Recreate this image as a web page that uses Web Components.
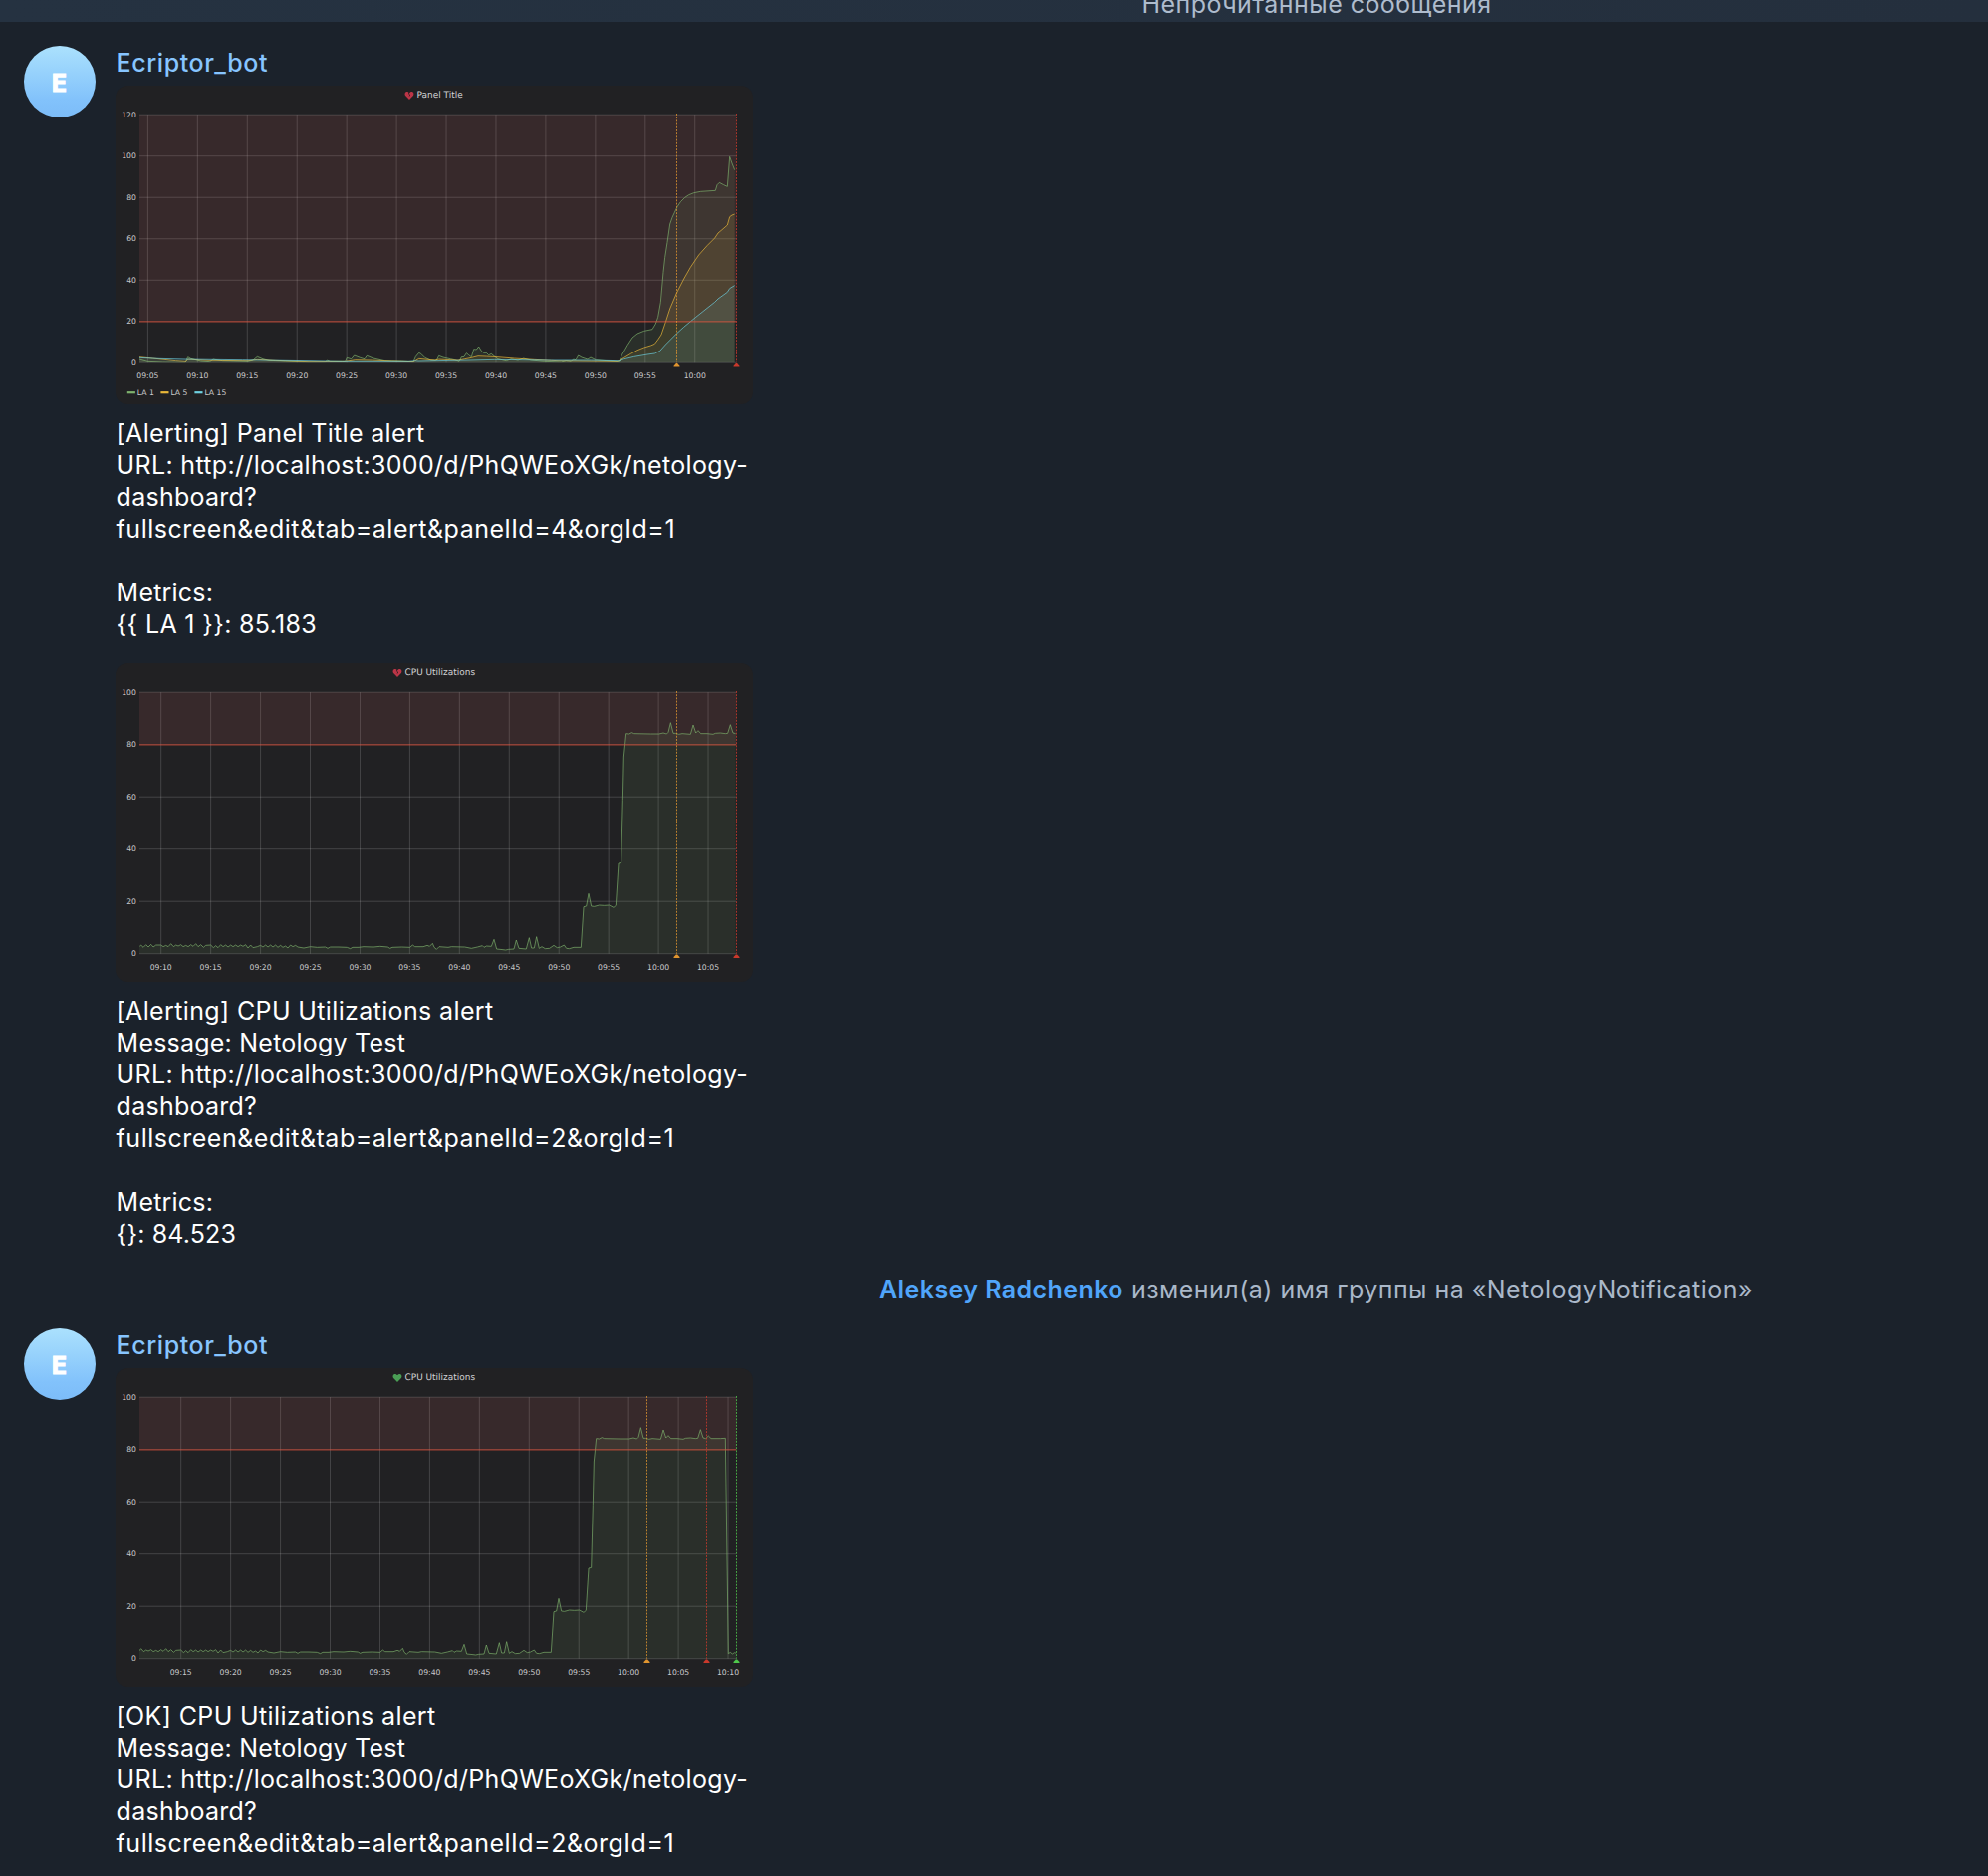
<!DOCTYPE html>
<html lang="ru">
<head>
<meta charset="utf-8">
<title>NetologyNotification</title>
<style>
html,body{margin:0;background:#1b222b}
body{width:1996px;height:1884px;overflow:hidden;font-family:Inter,"Liberation Sans",sans-serif;font-size:25px;line-height:32px;color:#fff}
</style>
</head>
<body>
<chat-history>
  <unread-bar><fit-text w="351">Непрочитанные сообщения</fit-text></unread-bar>
  <chat-message class="first" letter="E">
    <fit-text slot="name" w="152.5">Ecriptor_bot</fit-text>
    <graph-panel kind="load"></graph-panel>
    <message-text>
      <fit-text w="310">[Alerting] Panel Title alert</fit-text>
      <fit-text w="634.5">URL: http://localhost:3000/d/PhQWEoXGk/netology-</fit-text>
      <fit-text w="141.5">dashboard?</fit-text>
      <fit-text w="561.5">fullscreen&amp;edit&amp;tab=alert&amp;panelId=4&amp;orgId=1</fit-text>
      <br>
      <fit-text w="97.5">Metrics:</fit-text>
      <fit-text w="201.5">{{ LA 1 }}: 85.183</fit-text>
    </message-text>
    <graph-panel kind="cpu"></graph-panel>
    <message-text>
      <fit-text w="379">[Alerting] CPU Utilizations alert</fit-text>
      <fit-text w="290.5">Message: Netology Test</fit-text>
      <fit-text w="634.5">URL: http://localhost:3000/d/PhQWEoXGk/netology-</fit-text>
      <fit-text w="141.5">dashboard?</fit-text>
      <fit-text w="560.5">fullscreen&amp;edit&amp;tab=alert&amp;panelId=2&amp;orgId=1</fit-text>
      <br>
      <fit-text w="97.5">Metrics:</fit-text>
      <fit-text w="120.5">{}: 84.523</fit-text>
    </message-text>
  </chat-message>
  <service-message>
    <fit-text slot="who" w="245">Aleksey Radchenko</fit-text>
    <fit-text w="624">изменил(а) имя группы на «NetologyNotification»</fit-text>
  </service-message>
  <chat-message letter="E">
    <fit-text slot="name" w="152.5">Ecriptor_bot</fit-text>
    <graph-panel kind="ok"></graph-panel>
    <message-text>
      <fit-text w="321">[OK] CPU Utilizations alert</fit-text>
      <fit-text w="290.5">Message: Netology Test</fit-text>
      <fit-text w="634.5">URL: http://localhost:3000/d/PhQWEoXGk/netology-</fit-text>
      <fit-text w="141.5">dashboard?</fit-text>
      <fit-text w="560.5">fullscreen&amp;edit&amp;tab=alert&amp;panelId=2&amp;orgId=1</fit-text>
    </message-text>
  </chat-message>
</chat-history>
<script>
function define(name, css, html, ready) {
  const tpl = document.createElement('template');
  tpl.innerHTML = '<style>' + css + '</style>' + html;
  customElements.define(name, class extends HTMLElement {
    constructor() {
      super();
      this.attachShadow({ mode: 'open' }).append(tpl.content.cloneNode(true));
    }
    connectedCallback() { if (ready) ready(this, this.shadowRoot); }
  });
}

define('chat-history', ':host{display:flex;flex-direction:column;width:1996px;height:1884px;background:#1b222b}::slotted(*){flex:none}', '<slot></slot>');

define('unread-bar', ':host{display:flex;justify-content:center;align-items:flex-end;height:22px;box-sizing:border-box;padding:0 0 2.5px 648px;background:linear-gradient(90deg,#253241,#242f3d);color:#aebccd;overflow:hidden}', '<slot></slot>');

define('chat-message',
  ':host{display:flex;align-items:flex-start;padding:23px 0 0 24px;gap:20px}:host(.first){padding-top:24px}' +
  '.avatar{flex:none;width:72px;height:72px;border-radius:50%;background:linear-gradient(#abe1fd,#82c2fb 75%,#7cbcf8);display:flex;align-items:center;justify-content:center;font-size:24.5px;font-weight:700;-webkit-text-stroke:1.2px #fff;stroke-linejoin:round;padding:1px 1px 0 0;box-sizing:border-box}' +
  '.body{display:flex;flex-direction:column;padding-top:1px}.name{color:#87c5ff;font-weight:500;height:39px;padding-left:.6px}',
  '<div class="avatar"></div><div class="body"><div class="name"><slot name="name"></slot></div><slot></slot></div>',
  (el, r) => { r.querySelector('.avatar').textContent = el.getAttribute('letter'); });

define('message-text', ':host{display:block;padding:13px 0 23px .6px}::slotted(fit-text){display:table}', '<slot></slot>');

define('service-message',
  ':host{display:flex;justify-content:center;gap:8px;padding:1px 0 0 647px;color:#aab8c9}.who{color:#50a5fa;font-weight:600}',
  '<span class="who"><slot name="who"></slot></span><slot></slot>');

// Spreads its letters so that the line takes the advance width given in "w".
define('fit-text', ':host{display:inline-block;white-space:pre}', '<slot></slot>', el => {
  const n = el.textContent.length, w = +el.getAttribute('w');
  el.style.letterSpacing = '0px';
  el.style.letterSpacing = ((w - el.getBoundingClientRect().width) / n).toFixed(3) + 'px';
});

// Samples are kept in thirds of a pixel, as x,y pairs.
const shift = (s, d) => s.trim().split(/\s+/).map(p => { const [x, y] = p.split(','); return (+x + d) + ',' + y; }).join(' ');
const cpuBase = `90,872 95,867 102,874 110,866 117,873 125,865 132,873 140,867 155,867 162,872 170,868 177,872 185,863 193,872 200,867 207,870 215,866 222,872 230,868 237,872 245,866 252,871 260,863 267,872 275,866 283,874 290,868 305,867 313,875 320,869 327,875 335,866 342,872 350,867 357,873 365,867 372,872 380,867 387,872 395,867 402,871 410,866 417,876 425,867 432,875 445,872 455,868 462,873 470,867 477,873 485,867 492,873 500,867 507,874 515,868 522,874 530,870 537,876 545,867 552,872 560,868 567,873 585,876 605,872 625,874 650,873 657,877 665,873 690,873 715,874 725,878 732,874 750,874 765,872 795,873 815,871 838,873 845,877 852,874 880,873 905,874 913,867 920,872 945,872 957,868 964,871 973,862 978,874 985,880 993,872 1020,874 ` +
  shift(`40,872 80,873 100,877 118,873 133,869 138,874 145,870 160,871 168,850 176,879 195,881 203,882 212,880 228,879 235,852 243,877 265,879 274,845 281,876 289,876 296,842 304,877 312,872 322,878 335,877 348,868 358,875 368,873 379,867 386,877 395,878 408,874 430,874 438,752 446,750 453,712 461,750 470,751 485,747 500,748 515,747 528,754 535,748 543,621 551,619 556,430 559,300 566,230 575,231 583,227 590,230 640,231 665,231 678,228 688,231 693,226 700,197 708,229 715,229 725,232 735,230 760,232 768,204 776,228 783,221 791,230 810,230 828,232 835,229 850,228 865,230 872,229 880,203 888,228 896,230`, 990);
const cpuEnd = shift('904,222 912,230 940,230 955,229 964,878 970,874 976,879 983,875 988,877', 990);

const G = '#7eb26d', Y = '#eab839', B = '#6ed0e0', OR = '#e0952f', RD = '#c9392b', GR = '#4fc74b';
const panels = {
  load: {
    title: 'Panel Title', tx: 302.5, heart: 295, alert: true, bottom: 278.3, max: 120, threshold: 20,
    first: 5, n: 12, x0: 32.4, marks: [[563.5, OR], [623.5, RD]], legend: true,
    series: [
      [G, '90,843 115,850 160,852 228,853 236,836 245,841 275,849 302,851 312,843 340,848 417,850 432,846 445,835 462,842 480,847 530,849 600,852 650,852 655,846 665,850 710,850 715,838 728,842 737,831 755,838 768,842 775,832 795,840 830,848 880,849 915,851 922,835 ' +
        shift('2,823 8,826 20,838 38,846 55,846 62,832 75,837 97,842 110,845 123,850 130,836 138,835 145,824 152,830 160,836 167,812 175,813 182,804 190,817 197,823 205,823 212,830 220,826 228,833 240,842 265,848 280,842 300,846 317,840 340,846 380,850 430,852 445,848 460,850 467,843 474,845 482,831 492,837 510,843 519,837 535,845 570,848 605,851 613,830 630,800 645,777 660,765 680,757 705,752 715,735 722,715 730,670 738,580 743,535 750,490 758,435 765,415 772,400 780,383 790,368 803,355 815,347 830,341 850,337 895,334 900,317 907,310 920,317 931,322 938,232 945,252 953,272', 930)],
      [Y, '90,836 130,840 200,848 230,850 236,843 300,847 417,848 445,844 500,847 600,851 710,850 740,845 790,846 850,849 915,851 ' +
        shift('2,841 50,846 62,843 120,846 140,842 160,838 180,833 205,834 240,836 290,840 350,844 420,848 600,850 620,838 640,826 660,815 680,807 700,801 712,796 722,783 732,768 745,730 758,690 778,643 800,600 820,565 845,528 870,500 893,477 903,462 915,452 931,438 938,413 945,408 953,405', 930)],
      [B, '90,838 150,841 230,843 400,845 600,848 700,850 900,850 920,848 ' +
        shift('0,849 150,846 230,844 400,846 520,846 605,848 620,842 650,835 690,828 712,825 728,817 745,798 778,765 800,745 835,716 893,670 903,660 931,640 938,629 953,620', 930)]
    ]
  },
  cpu: {
    title: 'CPU Utilizations', tx: 290.5, heart: 283, alert: true, bottom: 291.7, max: 100, threshold: 80,
    first: 10, n: 12, x0: 45.7, marks: [[563.5, OR], [623.5, RD]], series: [[G, cpuBase]]
  },
  ok: {
    title: 'CPU Utilizations', tx: 290.5, heart: 283, alert: false, bottom: 291.7, max: 100, threshold: 80,
    first: 15, n: 12, x0: 65.7, marks: [[533.5, OR], [593.5, RD], [623.5, GR]], series: [[G, shift(cpuBase + ' ' + cpuEnd, -90)]]
  }
};

define('graph-panel',
  ':host{display:block;width:640px;height:320px;border-radius:12px;background:#212123;overflow:hidden}' +
  'svg{display:block}text{font:7.68px "DejaVu Sans",sans-serif;fill:#c9cacc;text-rendering:geometricPrecision}.t{font-size:8.96px;fill:#d2d3d5}',
  '<svg width="640" height="320" viewBox="0 0 640 320"></svg>',
  (el, r) => {
    const p = panels[el.getAttribute('kind')], L = 24, R = 623.3, T = 29.2, H = p.bottom - T;
    const y = v => p.bottom - v / p.max * H;
    let s = `<clipPath id="c"><rect x="${L}" y="0" width="${R - L}" height="${p.bottom}"/></clipPath>`;
    const c = p.heart;
    s += `<path d="M${c} 13.9L${c - 3.9} 9.9C${c - 5.3} 7.8 ${c - 3.6} 5.6 ${c - 1.9} 6C${c - .9} 6.1 ${c} 7.2 ${c} 7.2C${c} 7.2 ${c + .9} 6.1 ${c + 1.9} 6C${c + 3.6} 5.6 ${c + 5.3} 7.8 ${c + 3.9} 9.9Z" fill="${p.alert ? '#bb3547' : '#4a9e55'}"/>`;
    if (p.alert) s += `<path d="M${c} 6.4l-.6 1.7 1.3.9-.6 1.5" fill="none" stroke="#2b1c1f" stroke-width=".8"/>`;
    s += `<text class="t" x="${p.tx}" y="12">${p.title}</text>`;
    s += '<g stroke="#fff" stroke-opacity=".16" stroke-width="1">';
    for (let v = 0; v <= p.max; v += 20) s += `<path d="M${L} ${y(v)}H${R}"/>`;
    for (let i = 0; i < p.n; i++) s += `<path d="M${p.x0 + i * 49.94} ${T}V${p.bottom}"/>`;
    s += '</g>';
    for (let v = 0; v <= p.max; v += 20) s += `<text x="20.9" y="${y(v) + 2.6}" text-anchor="end">${v}</text>`;
    for (let i = 0; i < p.n; i++) {
      const m = p.first + i * 5, t = (m >= 60 ? '10:' : '09:') + String(m % 60).padStart(2, '0');
      s += `<text x="${p.x0 + i * 49.94}" y="${p.bottom + 15.9}" text-anchor="middle">${t}</text>`;
    }
    s += `<rect x="${L}" y="${T}" width="${R - L}" height="${y(p.threshold) - T}" fill="#ea7070" fill-opacity=".11"/>`;
    s += '<g clip-path="url(#c)">';
    for (const [col, pts] of p.series) {
      const a = pts.trim().split(/\s+/).map(q => q.split(',').map(v => +v / 3 - 6));
      const d = a.map(q => q[0].toFixed(2) + ' ' + q[1].toFixed(2)).join('L');
      s += `<path d="M${a[0][0]} ${p.bottom}L${d}L${a[a.length - 1][0]} ${p.bottom}Z" fill="${col}" fill-opacity=".1"/>`;
      s += `<path d="M${d}" fill="none" stroke="${col}" stroke-opacity=".76" stroke-width=".9" stroke-linejoin="round"/>`;
    }
    s += '</g>';
    s += `<path d="M${L} ${y(p.threshold) + .1}H${R}" stroke="#d9452f" stroke-opacity=".64" stroke-width="1.3"/>`;
    for (const [x, col] of p.marks)
      s += `<path d="M${x} 28V${p.bottom}" stroke="${col}" stroke-opacity=".8" stroke-width="1" stroke-dasharray="1.9 1.3"/><path d="M${x - 3} ${p.bottom + 4.2}v-.8l2.4-2.7h1.2l2.4 2.7v.8z" fill="${col}"/>`;
    if (p.legend)
      [['LA 1', G, 11.8], ['LA 5', Y, 45.4], ['LA 15', B, 79.4]].forEach(([t, col, x]) => {
        s += `<rect x="${x}" y="307.1" width="8.1" height="2.2" fill="${col}"/><text x="${x + 10}" y="310.8">${t}</text>`;
      });
    r.querySelector('svg').innerHTML = s;
  });
</script>
</body>
</html>
